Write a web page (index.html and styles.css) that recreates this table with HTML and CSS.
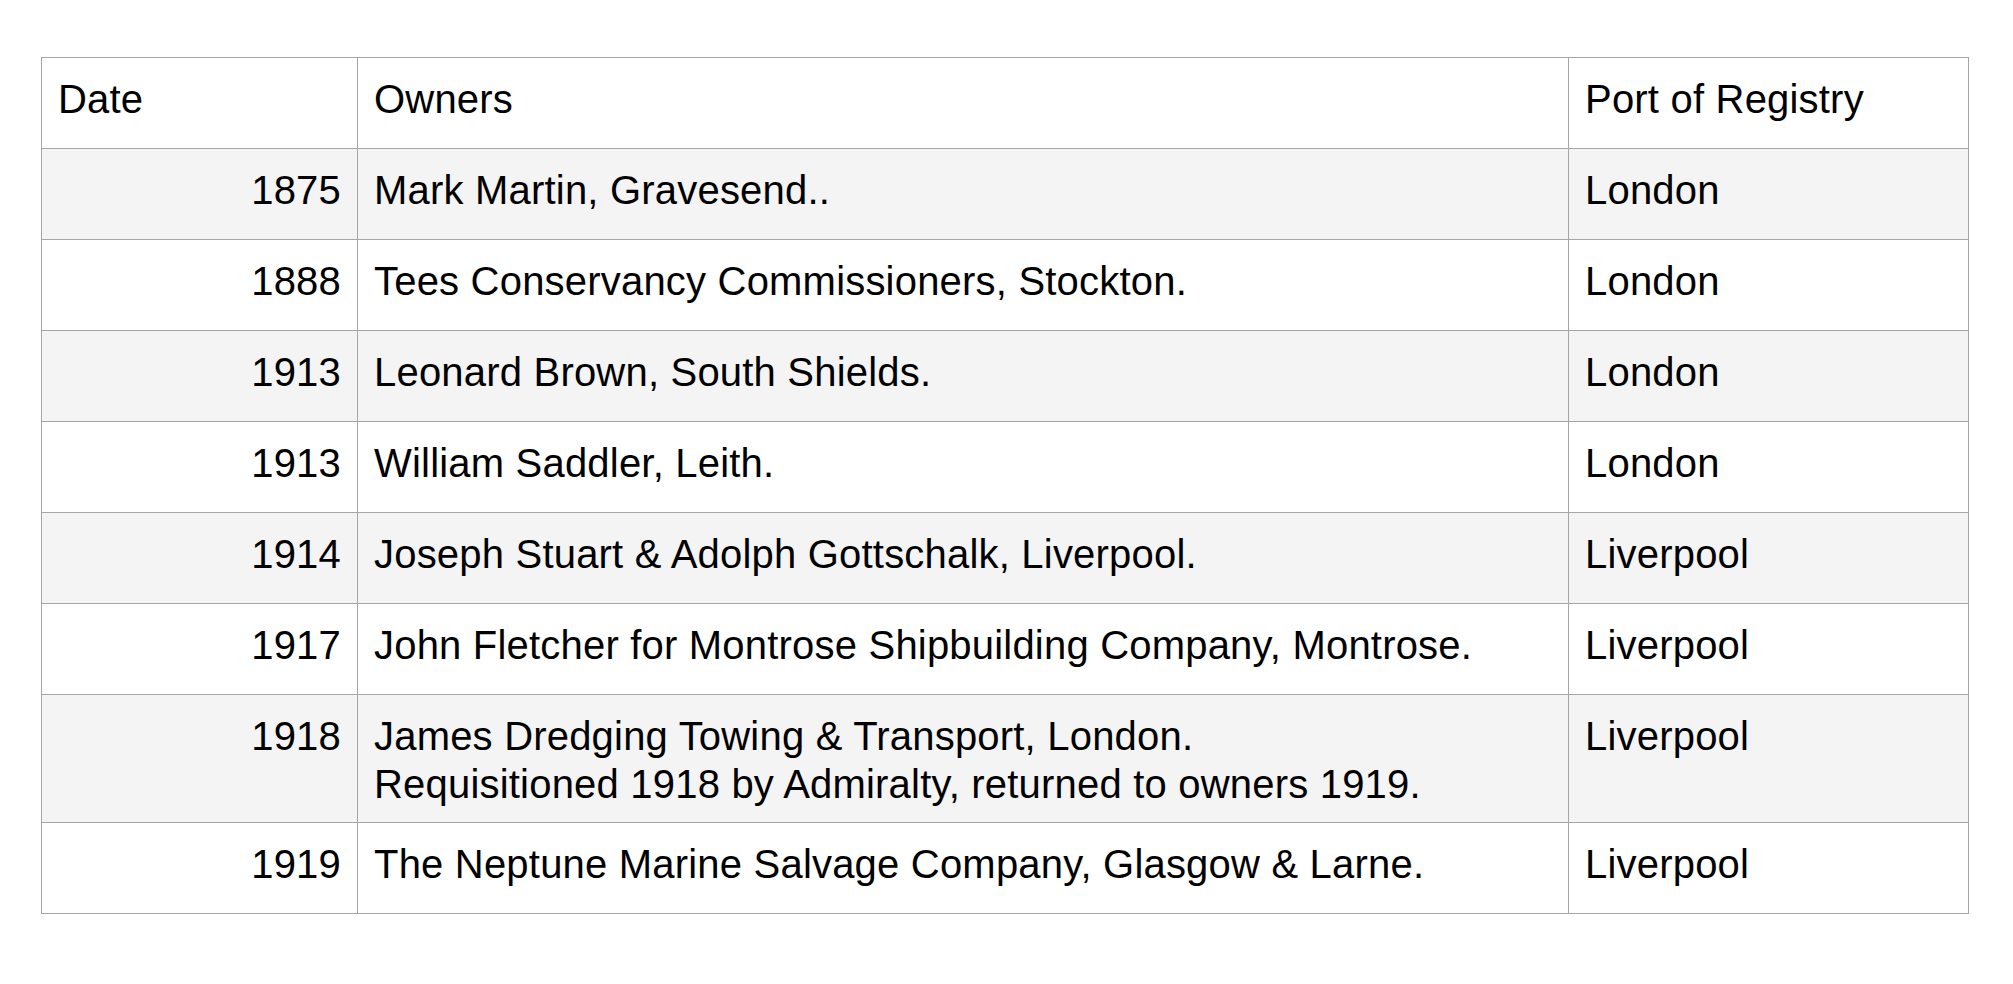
FILE: index.html
```html
<!DOCTYPE html>
<html lang="en">
<head>
<meta charset="utf-8">
<title>Ownership history</title>
<link rel="stylesheet" href="styles.css">
</head>
<body>
<main class="page">
  <table class="owners-table">
    <colgroup>
      <col class="col-date">
      <col class="col-owners">
      <col class="col-port">
    </colgroup>
    <thead>
      <tr>
        <th class="cell">Date</th>
        <th class="cell">Owners</th>
        <th class="cell">Port of Registry</th>
      </tr>
    </thead>
    <tbody>
      <tr class="row-alt">
        <td class="cell cell-date">1875</td>
        <td class="cell">Mark Martin, Gravesend..</td>
        <td class="cell">London</td>
      </tr>
      <tr>
        <td class="cell cell-date">1888</td>
        <td class="cell">Tees Conservancy Commissioners, Stockton.</td>
        <td class="cell">London</td>
      </tr>
      <tr class="row-alt">
        <td class="cell cell-date">1913</td>
        <td class="cell">Leonard Brown, South Shields.</td>
        <td class="cell">London</td>
      </tr>
      <tr>
        <td class="cell cell-date">1913</td>
        <td class="cell">William Saddler, Leith.</td>
        <td class="cell">London</td>
      </tr>
      <tr class="row-alt">
        <td class="cell cell-date">1914</td>
        <td class="cell">Joseph Stuart &amp; Adolph Gottschalk, Liverpool.</td>
        <td class="cell">Liverpool</td>
      </tr>
      <tr>
        <td class="cell cell-date">1917</td>
        <td class="cell">John Fletcher for Montrose Shipbuilding Company, Montrose.</td>
        <td class="cell">Liverpool</td>
      </tr>
      <tr class="row-alt">
        <td class="cell cell-date">1918</td>
        <td class="cell">James Dredging Towing &amp; Transport, London.<br>Requisitioned 1918 by Admiralty, returned to owners 1919.</td>
        <td class="cell">Liverpool</td>
      </tr>
      <tr>
        <td class="cell cell-date">1919</td>
        <td class="cell">The Neptune Marine Salvage Company, Glasgow &amp; Larne.</td>
        <td class="cell">Liverpool</td>
      </tr>
    </tbody>
  </table>
</main>
</body>
</html>
```

FILE: styles.css
```css
html, body {
  margin: 0;
  padding: 0;
  background: #ffffff;
}

.page {
  padding: 57px 0 0 41px;
  font-family: "Liberation Sans", Arial, Helvetica, sans-serif;
  color: #000000;
}

.owners-table {
  border-collapse: collapse;
  table-layout: fixed;
  width: 1927px;
  font-size: 40px;
  line-height: 48px;
  letter-spacing: 0.2px;
}

.col-date { width: 316px; }
.col-owners { width: 1211px; }
.col-port { width: 400px; }

.cell {
  border: 1px solid #a6a6a6;
  padding: 17px 16px 14px 16px;
  height: 59px;
  text-align: left;
  vertical-align: top;
  font-weight: normal;
}

.cell-date {
  text-align: right;
}

.row-alt {
  background: #f4f4f4;
}
```
